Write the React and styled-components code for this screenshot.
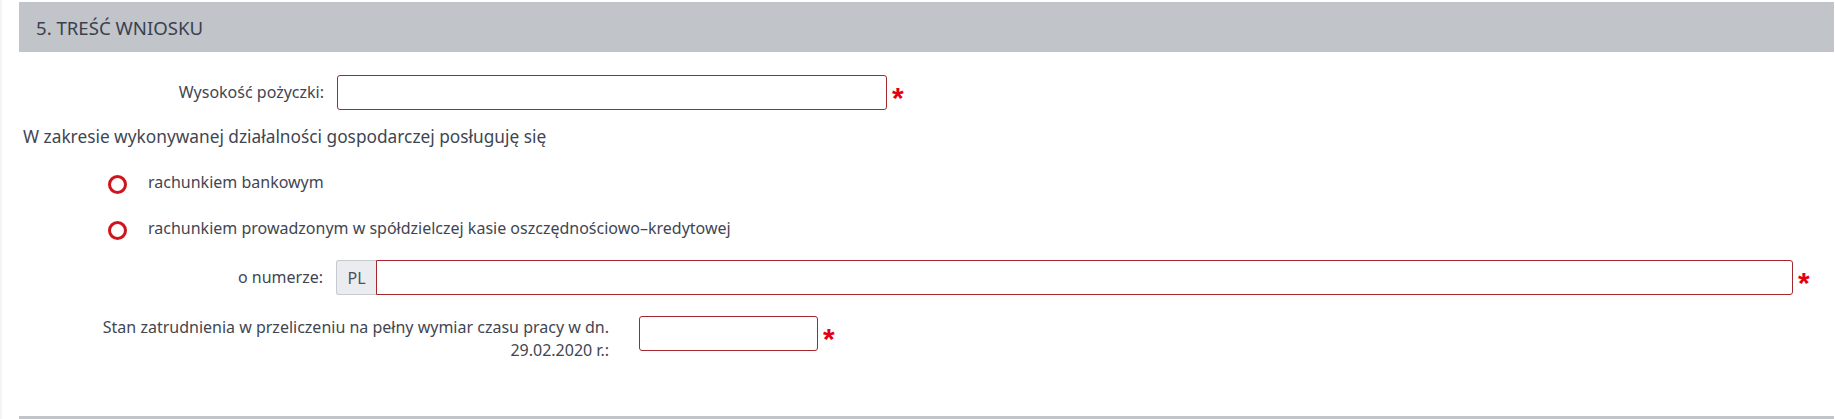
import React from "react";
import styled, { createGlobalStyle } from "styled-components";

const Global = createGlobalStyle`
  html, body { margin: 0; padding: 0; }
  body { background: #f4f4f5; font-family: "Noto Sans", "Open Sans", sans-serif; color: #3f4652; }
`;

const Page = styled.div`
  padding-left: 2px;
  height: 419px;
  overflow: hidden;
`;

const Panel = styled.section`
  background: #fff;
  height: 100%;
  padding: 2px 1px 0 17px;
  box-sizing: border-box;
  display: flex;
  flex-direction: column;
`;

const Band = styled.header`
  height: 50px;
  background: #c1c4c9;
  display: flex;
  align-items: center;
  padding-left: 17px;
  font-size: 18.6px;
  color: #3a414e;
`;

const Body = styled.div`
  flex: 1;
  display: flex;
  flex-direction: column;
  padding-top: 23px;
`;

const FieldRow = styled.div`
  display: flex;
  align-items: ${p => (p.$top ? "flex-start" : "center")};
  margin-top: ${p => p.$mt || 0}px;
`;

const Label = styled.label`
  width: ${p => p.$w}px;
  padding-right: ${p => p.$gap}px;
  box-sizing: content-box;
  text-align: right;
  font-size: 16px;
  line-height: ${p => p.$lh || 23}px;
  flex-shrink: 0;
`;

const Control = styled.div`
  display: flex;
  align-items: center;
`;

const Input = styled.input`
  width: ${p => p.$w}px;
  height: 35px;
  box-sizing: border-box;
  border: 1px solid #a3282e;
  border-radius: ${p => (p.$joined ? "0 3px 3px 0" : "3px")};
  background: #fff;
  margin: 0;
  padding: 0 8px;
  outline: none;
`;

const Addon = styled.span`
  width: 40px;
  height: 35px;
  box-sizing: border-box;
  background: #eaecef;
  border: 1px solid #c7cbd0;
  border-right: none;
  border-radius: 3px 0 0 3px;
  display: flex;
  align-items: center;
  justify-content: center;
  font-size: 16px;
  color: #4a515d;
`;

const Required = styled.span`
  color: #e3000f;
  font-family: "Liberation Sans", sans-serif;
  font-weight: bold;
  font-size: 30px;
  line-height: 1;
  margin-left: 5px;
  transform: translateY(5px);
`;

const Sentence = styled.p`
  margin: 17px 0 0 4px;
  font-size: 17.3px;
  line-height: 20px;
`;

const RadioList = styled.div`
  display: flex;
  flex-direction: column;
  gap: 26px;
  margin-top: 25px;
  padding-left: 89px;
`;

const RadioItem = styled.label`
  display: flex;
  align-items: center;
  gap: 21px;
  font-size: 16px;
  line-height: 20px;
`;

const RadioCircle = styled.span`
  width: 19px;
  height: 19px;
  box-sizing: border-box;
  border: 3.5px solid #d0141c;
  border-radius: 50%;
  flex-shrink: 0;
  transform: translateY(2px);
`;

const BottomRule = styled.div`
  margin-top: auto;
  height: 3px;
  background: #c1c4c9;
`;

export default function App() {
  return (
    <Page>
      <Global />
      <Panel>
        <Band>5. TREŚĆ WNIOSKU</Band>
        <Body>
          <FieldRow>
            <Label $w={305} $gap={13}>Wysokość pożyczki:</Label>
            <Control>
              <Input $w={550} />
              <Required>*</Required>
            </Control>
          </FieldRow>

          <Sentence>W zakresie wykonywanej działalności gospodarczej posługuję się</Sentence>

          <RadioList>
            <RadioItem><RadioCircle />rachunkiem bankowym</RadioItem>
            <RadioItem><RadioCircle />rachunkiem prowadzonym w spółdzielczej kasie oszczędnościowo–kredytowej</RadioItem>
          </RadioList>

          <FieldRow $mt={22}>
            <Label $w={304} $gap={13}>o numerze:</Label>
            <Control>
              <Addon>PL</Addon>
              <Input $w={1417} $joined />
              <Required>*</Required>
            </Control>
          </FieldRow>

          <FieldRow $mt={21} $top>
            <Label $w={590} $gap={30} $lh={23}>
              Stan zatrudnienia w przeliczeniu na pełny wymiar czasu pracy w dn.<br />29.02.2020 r.:
            </Label>
            <Control>
              <Input $w={179} />
              <Required>*</Required>
            </Control>
          </FieldRow>
        </Body>
        <BottomRule />
      </Panel>
    </Page>
  );
}
